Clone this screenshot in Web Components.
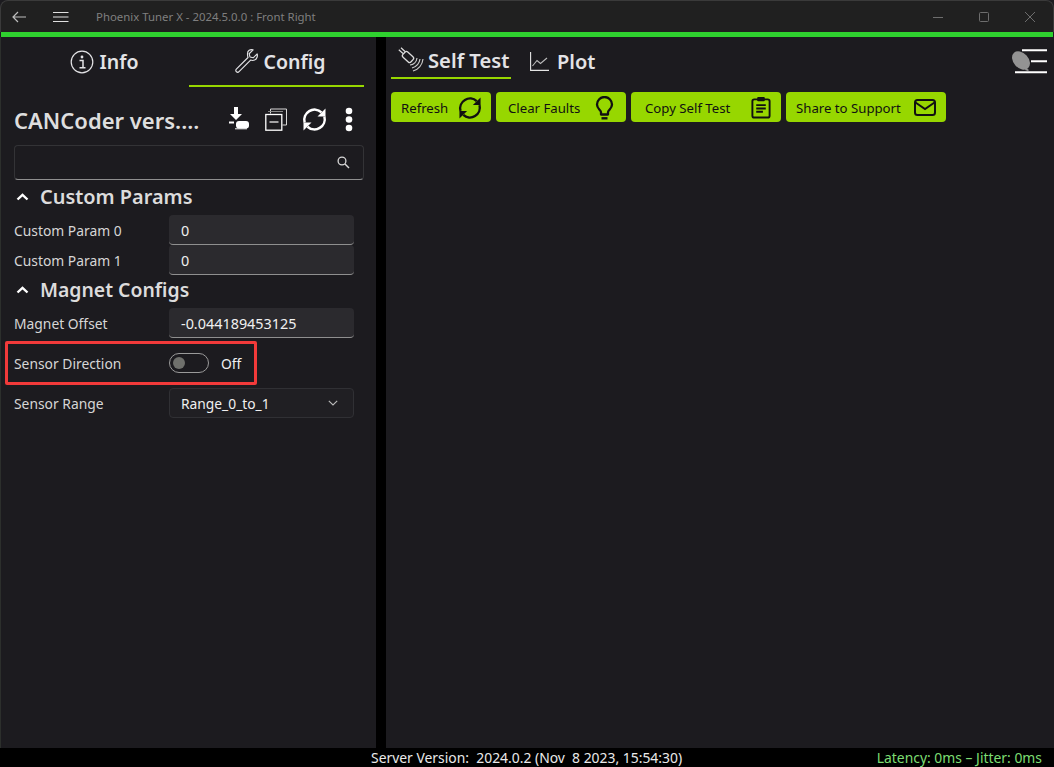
<!DOCTYPE html>
<html lang="en">
<head>
<meta charset="utf-8">
<title>Phoenix Tuner X</title>
<style>
  html, body { margin: 0; height: 100%; background: #1c1b1f; }
  body { font-family: "Noto Sans", "Open Sans", sans-serif; color: #e6e6e6; overflow: hidden; }
</style>
</head>
<body>
<tuner-app>
  <title-bar slot="top" caption="Phoenix Tuner X - 2024.5.0.0 : Front Right"></title-bar>
  <side-panel slot="left"></side-panel>
  <main-panel slot="right"></main-panel>
  <status-bar slot="bottom"></status-bar>
</tuner-app>

<script>
const ICONS = {
  info: '<circle cx="12" cy="12" r="10.8" fill="none" stroke="currentColor" stroke-width="1.2"/><circle cx="12" cy="7" r="1.4" fill="currentColor"/><path d="M9.5 10.5H13V17.5M9.5 17.7H15.5" fill="none" stroke="currentColor" stroke-width="1.5"/>',
  wrench: '<path d="M14.4 9.1 3.2 20.2a1.8 1.8 0 0 0 .1 2.6 1.8 1.8 0 0 0 2.5-.1L16.9 11.6c2.7 1 5.4-.1 6.2-2.7.4-1.1.4-2.2.1-3.2L19.4 9.4 16.3 8.6 15.5 5.5 19.3 1.8C16.5 1 13.9 2.4 13.9 5.5c0 1.3.1 2.5.5 3.6z" fill="none" stroke="currentColor" stroke-width="1.1" stroke-linejoin="round"/>',
  refresh: '<path d="M2.6 15.5A10.3 10.3 0 0 1 19.5 5.3" fill="none" stroke="currentColor" stroke-width="2.5"/><path d="M22.4 9.5A10.3 10.3 0 0 1 5.5 19.7" fill="none" stroke="currentColor" stroke-width="2.5"/><path d="M23.5 1.5v8h-8zM1.5 23.5v-8h8z" fill="currentColor"/>',
  bulb: '<path d="M9 18.5v-2.3C9 14 5 12.8 5 8.5a7.5 7.5 0 0 1 15 0c0 4.3-4 5.5-4 7.7v2.3z" fill="none" stroke="currentColor" stroke-width="2.3" stroke-linejoin="round"/><path d="M9.5 22.3h6" stroke="currentColor" stroke-width="2.4"/>',
  clip: '<rect x="2.5" y="3.5" width="18" height="19" rx="2" fill="none" stroke="currentColor" stroke-width="2"/><rect x="7.5" y="1" width="8" height="4.5" rx="1" fill="currentColor"/><path d="M6.5 9.5h10M6.5 13h10M6.5 16.5h7" stroke="currentColor" stroke-width="2"/>',
  mail: '<rect x="1" y="1" width="20" height="15" rx="2.5" fill="none" stroke="currentColor" stroke-width="2"/><path d="M1.5 3.5 11 10l9.5-6.5" fill="none" stroke="currentColor" stroke-width="2"/>'
};

class TunerApp extends HTMLElement {
  constructor() {
    super();
    this.attachShadow({ mode: "open" }).innerHTML = `
      <style>
        :host { display: grid; grid-template-rows: 32px 5px 1fr 19px; height: 767px; background: #1c1b1f; position: relative; }
        .body { display: grid; grid-template-columns: 376px 10px 1fr; min-height: 0; }
        .green { background: #2fd12f; margin: 0 1px; }
        .split { background: #000; }
      </style>
      <slot name="top"></slot>
      <div class="green"></div>
      <div class="body">
        <slot name="left"></slot>
        <div class="split"></div>
        <slot name="right"></slot>
      </div>
      <slot name="bottom"></slot>`;
  }
}

class TitleBar extends HTMLElement {
  constructor() {
    super();
    this.attachShadow({ mode: "open" });
  }
  connectedCallback() {
    this.shadowRoot.innerHTML = `
      <style>
        :host { display: flex; align-items: center; background: #202020; border: 1px solid #3a3a3a; border-bottom: 0; border-radius: 8px 8px 0 0; color: #7f7f7f; font-size: 11.4px; box-sizing: border-box; height: 32px; padding-left: 11px; }
        svg { display: block; flex: none; }
        .back { color: #bdbdbd; margin-right: 27px; }
        .menu { color: #e0e0e0; margin-right: 27px; }
        .cap { flex: 1; padding-bottom: 1px; }
        .ctl { display: flex; color: #6d6d6d; }
        .ctl span { width: 46px; height: 31px; display: grid; place-items: center; }
      </style>
      <svg class="back" width="14" height="12" viewBox="0 0 14 12"><path d="M14 6H1.2M6 1 1 6l5 5" fill="none" stroke="currentColor" stroke-width="1.2"/></svg>
      <svg class="menu" width="16" height="12" viewBox="0 0 16 12"><path d="M0 1.5h15.5M0 6h15.5M0 10.5h15.5" stroke="currentColor" stroke-width="1.2"/></svg>
      <div class="cap">${this.getAttribute("caption")}</div>
      <div class="ctl">
        <span><svg width="10" height="10"><path d="M0 5.5h10" stroke="currentColor"/></svg></span>
        <span><svg width="10" height="10"><rect x=".5" y=".5" width="9" height="9" rx="1" fill="none" stroke="currentColor"/></svg></span>
        <span><svg width="10" height="10"><path d="M0 0l10 10M10 0 0 10" stroke="currentColor"/></svg></span>
      </div>`;
  }
}

class TabItem extends HTMLElement {
  constructor() {
    super();
    this.attachShadow({ mode: "open" }).innerHTML = `
      <style>
        :host { display: flex; align-items: center; justify-content: var(--tab-justify, center); gap: var(--tab-gap, 6px); color: #e3e3e6; font-weight: 600; font-size: var(--tab-size, 20px); box-sizing: border-box; border-bottom: 2px solid transparent; padding: var(--tab-pad, 0); }
        :host([active]) { border-bottom-color: #97d700; }
      </style>
      <slot name="icon"></slot><slot></slot>`;
  }
}

class SectionHead extends HTMLElement {
  constructor() {
    super();
    this.attachShadow({ mode: "open" }).innerHTML = `
      <style>
        :host { display: flex; align-items: center; height: 30px; gap: 11px; padding: 0 0 2px 2px; box-sizing: border-box; font-size: 19.9px; font-weight: 600; color: #dcdcdc; }
        svg { display: block; margin-top: 1px; }
      </style>
      <svg width="13" height="8" viewBox="0 0 13 8"><path d="M1.5 6.5 6.5 1.8l5 4.7" fill="none" stroke="#fff" stroke-width="2.4"/></svg>
      <slot></slot>`;
  }
}

class ParamRow extends HTMLElement {
  constructor() {
    super();
    this.attachShadow({ mode: "open" });
  }
  connectedCallback() {
    const type = this.getAttribute("type") || "input";
    const value = this.getAttribute("value") || "";
    let control = `<div class="field">${value}</div>`;
    if (type === "select") {
      control = `<div class="field select">${value}<svg width="10" height="6" viewBox="0 0 10 6"><path d="M.8.8 5 5 9.2.8" fill="none" stroke="#bbb" stroke-width="1.1"/></svg></div>`;
    }
    if (type === "toggle") {
      control = `<div class="toggle-wrap"><span class="toggle"><i></i></span><span>${value}</span></div>`;
    }
    this.shadowRoot.innerHTML = `
      <style>
        :host { display: grid; grid-template-columns: 155px 185px; align-items: center; height: 30px; font-size: 13.85px; color: #d6d6d6; }
        .field { box-sizing: border-box; height: 30px; padding: 1px 11px 0 12px; display: flex; align-items: center; background: #2b2a2e; border-radius: 4px; border-bottom: 1px solid #8f8f8f; color: #f0f0f0; font-size: 14.4px; }
        .select { justify-content: space-between; background: #201f23; border: 1px solid #303034; padding: 0 15px 0 11px; font-size: 13.8px; }
        .toggle-wrap { display: flex; align-items: center; gap: 12px; color: #f0f0f0; }
        .toggle { box-sizing: border-box; display: block; width: 40px; height: 20px; border: 1px solid #9a9a9a; border-radius: 10px; position: relative; }
        .toggle i { position: absolute; left: 3px; top: 3px; width: 12px; height: 12px; background: #6f706c; border-radius: 50%; }
      </style>
      <div>${this.getAttribute("label")}</div>${control}`;
  }
}

class SidePanel extends HTMLElement {
  constructor() {
    super();
    this.attachShadow({ mode: "open" }).innerHTML = `
      <style>
        :host { display: block; padding: 1px 12px 0 14px; box-sizing: border-box; box-shadow: inset 1px 0 #2c2f2c; }
        * { box-sizing: border-box; }
        .tabs { display: grid; grid-template-columns: 1fr 1fr; height: 49px; --tab-size: 19.5px; --tab-pad: 0 0 0 5px; }
        svg { display: block; }
        .tools { display: flex; align-items: center; height: 58px; padding-top: 6px; color: #fff; }
        h1 { margin: 0; padding-top: 2px; flex: 1; font-size: 22px; font-weight: 600; color: #dedede; }
        .tools svg { flex: none; }
        .search { height: 35px; border: 1px solid #333336; border-bottom-color: #8f8f8f; border-radius: 4px; display: flex; align-items: center; justify-content: flex-end; padding-right: 13px; }
        .rows { width: 340px; }
        .redbox { position: absolute; left: 5px; top: 341px; width: 252px; height: 44px; border: 3px solid #f23a3a; border-radius: 2px; }
      </style>
      <div class="tabs">
        <tab-item><svg slot="icon" width="24" height="24" viewBox="0 0 24 24">${ICONS.info}</svg>Info</tab-item>
        <tab-item active><svg slot="icon" width="25" height="25" viewBox="0 0 24 24" style="margin-top:-2px">${ICONS.wrench}</svg>Config</tab-item>
      </div>
      <div class="tools">
        <h1>CANCoder vers....</h1>
        <svg width="20" height="24" viewBox="0 0 20 24" style="margin-right:16px"><path d="M5 0h4v7h4l-6 6-6-6h4z M0 14.5h5v2H0z" fill="#fff"/><rect x="7" y="14" width="13" height="7.5" rx="3" fill="#fff"/><path d="M6 21.8h12" stroke="#fff" stroke-width="1"/></svg>
        <svg width="23" height="23" viewBox="0 0 23 23" style="margin-right:14px"><path d="M5.5 5.5V1h16v16h-4" fill="none" stroke="#d8d8d8" stroke-width="1"/><path d="M3 3.500h15" stroke="#888"/><rect x=".8" y="6.5" width="16" height="15.700" fill="none" stroke="#fff" stroke-width="1.3"/><path d="M4.5 14h9" stroke="#fff" stroke-width="1.2"/></svg>
        <svg width="25" height="25" viewBox="0 0 25 25" style="margin-right:18px">${ICONS.refresh}</svg>
        <svg width="8" height="25" viewBox="0 0 8 25" style="margin-right:11px"><circle cx="4" cy="4" r="3.3" fill="#fff"/><circle cx="4" cy="12.5" r="3.3" fill="#fff"/><circle cx="4" cy="21" r="3.3" fill="#fff"/></svg>
      </div>
      <div class="search">
        <svg width="13" height="13" viewBox="0 0 13 13"><circle cx="5" cy="5" r="3.9" fill="none" stroke="#d8d8d8" stroke-width="1.3"/><path d="M8 8l4 4" stroke="#d8d8d8" stroke-width="1.5"/></svg>
      </div>
      <div class="rows">
        <section-head style="margin-top:2px">Custom Params</section-head>
        <param-row label="Custom Param 0" value="0" style="margin-top:3px"></param-row>
        <param-row label="Custom Param 1" value="0"></param-row>
        <section-head style="font-size:19.4px">Magnet Configs</section-head>
        <param-row label="Magnet Offset" value="-0.044189453125" style="margin-top:3px"></param-row>
        <param-row label="Sensor Direction" value="Off" type="toggle" style="margin-top:10px"></param-row>
        <param-row label="Sensor Range" value="Range_0_to_1" type="select" style="margin-top:10px"></param-row>
      </div>
      <div class="redbox"></div>`;
  }
}

class ActionButton extends HTMLElement {
  constructor() {
    super();
    this.attachShadow({ mode: "open" }).innerHTML = `
      <style>
        :host { display: flex; align-items: center; justify-content: space-between; box-sizing: border-box; height: 30px; padding: 1px 9px 0 10px; background: #97d700; color: #111; border-radius: 4px; font-size: 13.2px; }
      </style>
      <slot></slot><slot name="icon"></slot>`;
  }
}

class MainPanel extends HTMLElement {
  constructor() {
    super();
    this.attachShadow({ mode: "open" }).innerHTML = `
      <style>
        :host { display: block; padding: 0 5px; position: relative; }
        * { box-sizing: border-box; }
        svg { display: block; }
        .tabs { display: flex; height: 42px; align-items: stretch; --tab-size: 20.2px; --tab-gap: 3px; }
        .tabs .a { width: 120px; --tab-justify: flex-start; --tab-pad: 6px 0 0 7px; }
        .tabs .b { margin-left: 19px; --tab-gap: 8px; --tab-size: 20px; --tab-pad: 8px 0 0 0; }
        .actions { display: flex; gap: 5px; margin-top: 13px; }
        .dock { position: absolute; right: 7px; top: 12px; }
      </style>
      <div class="tabs">
        <tab-item class="a" active>
          <svg slot="icon" width="27" height="26" viewBox="0 0 27 26"><path d="M.8 2.800 5 6.500M3 .8 7 4.500" stroke="#ddd" stroke-width="1.2"/><rect x="-5.500" y="-3.500" width="11" height="7" rx="2" transform="translate(10 10) rotate(42)" fill="none" stroke="#ddd" stroke-width="1.3"/><path d="M19 11A8 8 0 0 1 12 18M22 12A11 11 0 0 1 14 21M25 12A14 14 0 0 1 15 24" fill="none" stroke="#ccc" stroke-width="1.2"/></svg>
          Self Test
        </tab-item>
        <tab-item class="b">
          <svg slot="icon" width="19" height="19" viewBox="0 0 19 19"><path d="M.6 0V18.4H19" fill="none" stroke="#e5e5e5" stroke-width="1.1"/><path d="M2.5 14 7 8.5l3.500 3L17 6" fill="none" stroke="#bbb" stroke-width="1.1"/></svg>
          Plot
        </tab-item>
      </div>
      <div class="actions">
        <action-button style="width:100px">Refresh<svg slot="icon" width="24" height="24" viewBox="0 0 25 25">${ICONS.refresh}</svg></action-button>
        <action-button style="width:130px;padding-left:12px">Clear Faults<svg slot="icon" width="25" height="24" viewBox="0 0 25 24">${ICONS.bulb}</svg></action-button>
        <action-button style="width:150px;padding-left:14px">Copy Self Test<svg slot="icon" width="22" height="23" viewBox="0 0 23 24">${ICONS.clip}</svg></action-button>
        <action-button style="width:160px;padding-right:10px">Share to Support<svg slot="icon" width="22" height="17" viewBox="0 0 22 17">${ICONS.mail}</svg></action-button>
      </div>
      <svg class="dock" width="35" height="25" viewBox="0 0 35 25"><ellipse cx="9" cy="11.500" rx="10.500" ry="7.500" transform="rotate(48 9 11.500)" fill="#939393"/><path d="M14 19l3 2-1 1-3-1z" fill="#939393"/><path d="M10 1.200H35M19 12.200H35M3 23.200H35" stroke="#fff" stroke-width="2"/></svg>`;
  }
}

class StatusBar extends HTMLElement {
  constructor() {
    super();
    this.attachShadow({ mode: "open" }).innerHTML = `
      <style>
        :host { display: flex; align-items: center; justify-content: space-between; background: #000; font-size: 13.9px; height: 19px; padding: 0 12px 0 371px; white-space: pre; color: #eaeaea; box-sizing: border-box; }
        .lat { color: #7ddd72; }
      </style>
      <span>Server Version:  2024.0.2 (Nov  8 2023, 15:54:30)</span>
      <span class="lat">Latency: 0ms – Jitter: 0ms</span>`;
  }
}

customElements.define("tuner-app", TunerApp);
customElements.define("title-bar", TitleBar);
customElements.define("tab-item", TabItem);
customElements.define("section-head", SectionHead);
customElements.define("param-row", ParamRow);
customElements.define("side-panel", SidePanel);
customElements.define("action-button", ActionButton);
customElements.define("main-panel", MainPanel);
customElements.define("status-bar", StatusBar);
</script>
</body>
</html>
